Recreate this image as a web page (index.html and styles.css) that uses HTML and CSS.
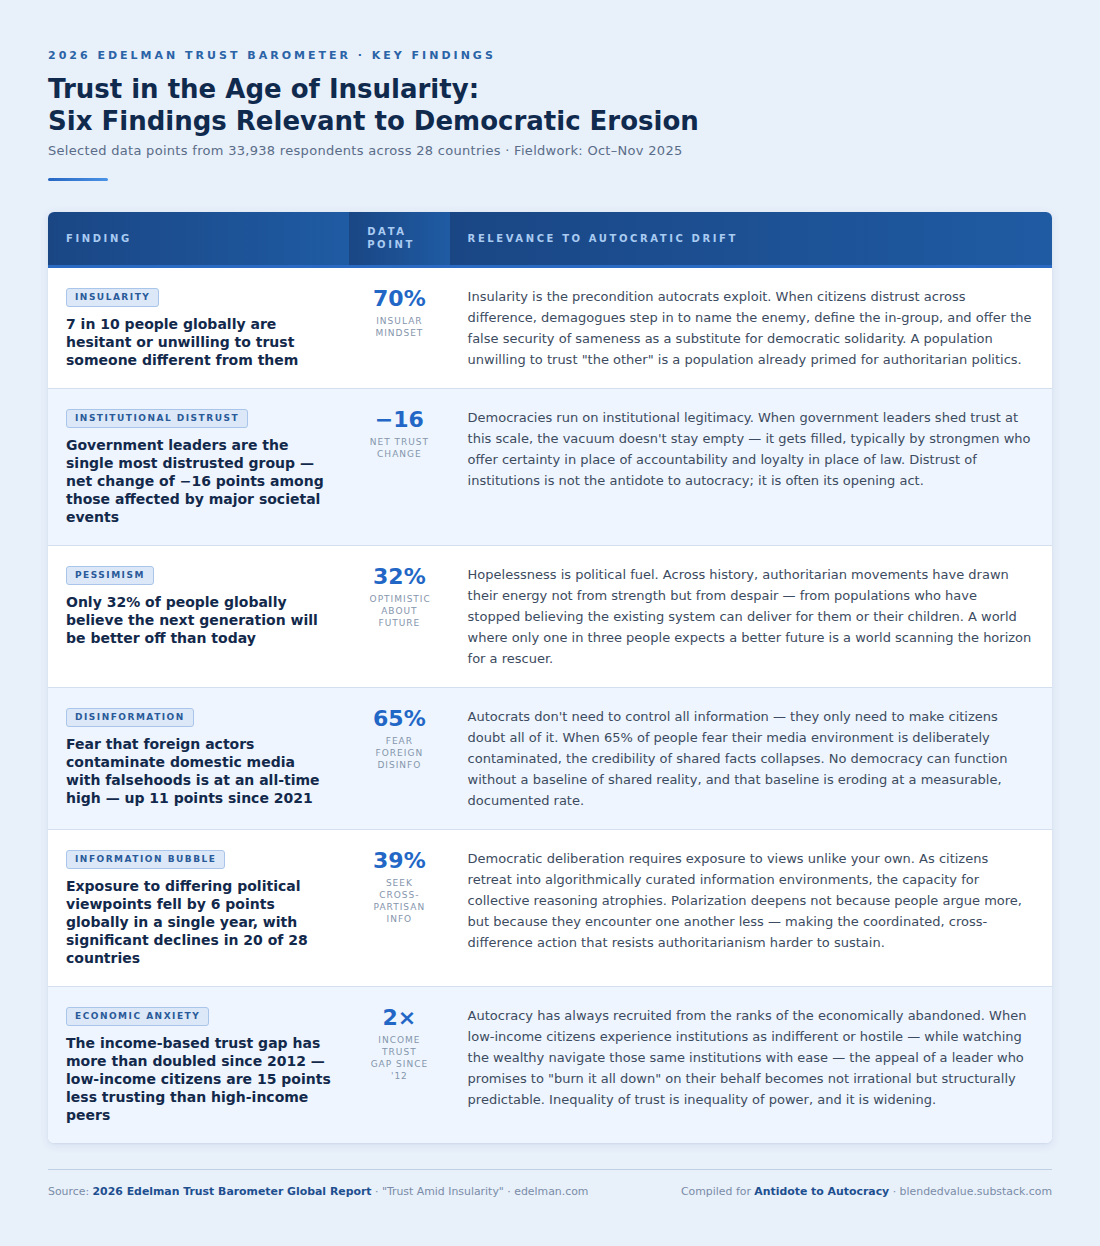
FILE: index.html
```html
<!DOCTYPE html>
<html lang="en">
<head>
<meta charset="utf-8">
<title>Trust in the Age of Insularity</title>
<link rel="stylesheet" href="styles.css">
</head>
<body>
<div class="page">
  <header class="intro">
    <div class="eyebrow">2026 Edelman Trust Barometer · Key Findings</div>
    <h1 class="title">Trust in the Age of Insularity:<br>Six Findings Relevant to Democratic Erosion</h1>
    <p class="subtitle">Selected data points from 33,938 respondents across 28 countries · Fieldwork: Oct–Nov 2025</p>
    <div class="accent"></div>
  </header>

  <div class="card">
    <table class="findings">
      <colgroup>
        <col class="c-finding">
        <col class="c-data">
        <col class="c-rel">
      </colgroup>
      <thead>
        <tr>
          <th>Finding</th>
          <th class="th-data">Data<br>Point</th>
          <th>Relevance to Autocratic Drift</th>
        </tr>
      </thead>
      <tbody>
        <tr>
          <td class="finding">
            <span class="badge">Insularity</span>
            <div class="claim">7 in 10 people globally are hesitant or unwilling to trust someone different from them</div>
          </td>
          <td class="data">
            <div class="num">70%</div>
            <div class="lbl">Insular mindset</div>
          </td>
          <td class="rel">Insularity is the precondition autocrats exploit. When citizens distrust across difference, demagogues step in to name the enemy, define the in-group, and offer the false security of sameness as a substitute for democratic solidarity. A population unwilling to trust "the other" is a population already primed for authoritarian politics.</td>
        </tr>
        <tr>
          <td class="finding">
            <span class="badge">Institutional Distrust</span>
            <div class="claim">Government leaders are the single most distrusted group — net change of −16 points among those affected by major societal events</div>
          </td>
          <td class="data">
            <div class="num">−16</div>
            <div class="lbl">Net trust change</div>
          </td>
          <td class="rel">Democracies run on institutional legitimacy. When government leaders shed trust at this scale, the vacuum doesn't stay empty — it gets filled, typically by strongmen who offer certainty in place of accountability and loyalty in place of law. Distrust of institutions is not the antidote to autocracy; it is often its opening act.</td>
        </tr>
        <tr>
          <td class="finding">
            <span class="badge">Pessimism</span>
            <div class="claim">Only 32% of people globally believe the next generation will be better off than today</div>
          </td>
          <td class="data">
            <div class="num">32%</div>
            <div class="lbl">Optimistic about future</div>
          </td>
          <td class="rel">Hopelessness is political fuel. Across history, authoritarian movements have drawn their energy not from strength but from despair — from populations who have stopped believing the existing system can deliver for them or their children. A world where only one in three people expects a better future is a world scanning the horizon for a rescuer.</td>
        </tr>
        <tr>
          <td class="finding">
            <span class="badge">Disinformation</span>
            <div class="claim">Fear that foreign actors contaminate domestic media with falsehoods is at an all-time high — up 11 points since 2021</div>
          </td>
          <td class="data">
            <div class="num">65%</div>
            <div class="lbl">Fear foreign disinfo</div>
          </td>
          <td class="rel">Autocrats don't need to control all information — they only need to make citizens doubt all of it. When 65% of people fear their media environment is deliberately contaminated, the credibility of shared facts collapses. No democracy can function without a baseline of shared reality, and that baseline is eroding at a measurable, documented rate.</td>
        </tr>
        <tr>
          <td class="finding">
            <span class="badge">Information Bubble</span>
            <div class="claim">Exposure to differing political viewpoints fell by 6 points globally in a single year, with significant declines in 20 of 28 countries</div>
          </td>
          <td class="data">
            <div class="num">39%</div>
            <div class="lbl">Seek cross-partisan info</div>
          </td>
          <td class="rel">Democratic deliberation requires exposure to views unlike your own. As citizens retreat into algorithmically curated information environments, the capacity for collective reasoning atrophies. Polarization deepens not because people argue more, but because they encounter one another less — making the coordinated, cross-difference action that resists authoritarianism harder to sustain.</td>
        </tr>
        <tr>
          <td class="finding">
            <span class="badge">Economic Anxiety</span>
            <div class="claim">The income-based trust gap has more than doubled since 2012 — low-income citizens are 15 points less trusting than high-income peers</div>
          </td>
          <td class="data">
            <div class="num">2×</div>
            <div class="lbl">Income trust gap since '12</div>
          </td>
          <td class="rel">Autocracy has always recruited from the ranks of the economically abandoned. When low-income citizens experience institutions as indifferent or hostile — while watching the wealthy navigate those same institutions with ease — the appeal of a leader who promises to "burn it all down" on their behalf becomes not irrational but structurally predictable. Inequality of trust is inequality of power, and it is widening.</td>
        </tr>
      </tbody>
    </table>
  </div>

  <footer class="foot">
    <div class="foot-left">Source: <strong>2026 Edelman Trust Barometer Global Report</strong> · "Trust Amid Insularity" · edelman.com</div>
    <div class="foot-right">Compiled for <strong>Antidote to Autocracy</strong> · blendedvalue.substack.com</div>
  </footer>
</div>
</body>
</html>
```

FILE: styles.css
```css
* { box-sizing: border-box; }

html, body {
  margin: 0;
  padding: 0;
  background: #e8f0fa;
}

body {
  font-family: "DejaVu Sans", "Noto Sans", sans-serif;
  color: #13294b;
}

.page {
  padding: 48px 48px 40px;
}

.intro {
  display: flex;
  flex-direction: column;
}

.eyebrow {
  font-size: 11px;
  line-height: 16px;
  font-weight: bold;
  letter-spacing: 3px;
  text-transform: uppercase;
  color: #2a63a6;
}

.title {
  margin: 9px 0 0;
  font-size: 26px;
  line-height: 32px;
  font-weight: bold;
  color: #102a4e;
}

.subtitle {
  margin: 4px 0 0;
  font-size: 13px;
  line-height: 20px;
  color: #5a6d88;
  letter-spacing: 0.3px;
}

.accent {
  margin-top: 17px;
  width: 60px;
  height: 3px;
  border-radius: 2px;
  background: linear-gradient(90deg, #2667c2, #4b93e6);
}

.card {
  margin-top: 31px;
  background: #ffffff;
  border-radius: 6px;
  overflow: hidden;
  box-shadow: 0 2px 10px rgba(30, 70, 130, 0.10), 0 1px 2px rgba(30, 70, 130, 0.06);
}

.findings {
  width: 100%;
  border-collapse: collapse;
  table-layout: fixed;
}

.c-finding { width: 30%; }
.c-data { width: 10%; }
.c-rel { width: 60%; }

.findings th {
  height: 54px;
  padding: 0 18px;
  text-align: left;
  vertical-align: middle;
  font-size: 10px;
  line-height: 13px;
  font-weight: bold;
  letter-spacing: 2.6px;
  text-transform: uppercase;
  color: #a9cbf2;
  background: linear-gradient(90deg, #1a4684, #1f5ba3);
  border-bottom: 3px solid #2b6ac2;
}

.findings th.th-data {
  padding: 0 16px 0 18px;
}

.findings td {
  vertical-align: top;
  padding: 18px;
  border-top: 1px solid #d3dfee;
}

.findings tbody tr:first-child td {
  border-top: none;
}

.findings tbody tr:nth-child(even) td {
  background: #eef5fe;
}

.findings td.finding {
  padding: 18px 18px 19px;
}

.badge {
  display: block;
  width: fit-content;
  margin-top: 2px;
  padding: 2px 8px;
  font-size: 9px;
  line-height: 13px;
  font-weight: bold;
  letter-spacing: 1.5px;
  text-transform: uppercase;
  color: #2a5a99;
  background: #dce8f8;
  border: 1px solid #a9c5ea;
  border-radius: 3px;
}

.claim {
  margin-top: 8px;
  font-size: 14px;
  line-height: 18px;
  font-weight: bold;
  color: #13294b;
}

.findings td.data {
  padding: 18px 20.4px;
  text-align: center;
}

.num {
  font-size: 22px;
  line-height: 25px;
  font-weight: bold;
  color: #2367c6;
}

.lbl {
  margin-top: 4px;
  font-size: 9px;
  line-height: 12px;
  letter-spacing: 1px;
  text-transform: uppercase;
  color: #8595ac;
}

.findings td.rel {
  padding: 18px 20px 18px 18px;
  font-size: 13px;
  line-height: 21px;
  color: #3c4b60;
}

.foot {
  margin-top: 26px;
  padding-top: 15px;
  border-top: 1px solid #c0d0e4;
  display: flex;
  justify-content: space-between;
  font-size: 10.9px;
  line-height: 14px;
  color: #7a8ca7;
}

.foot strong {
  color: #1e4f8f;
  font-weight: bold;
}
```
